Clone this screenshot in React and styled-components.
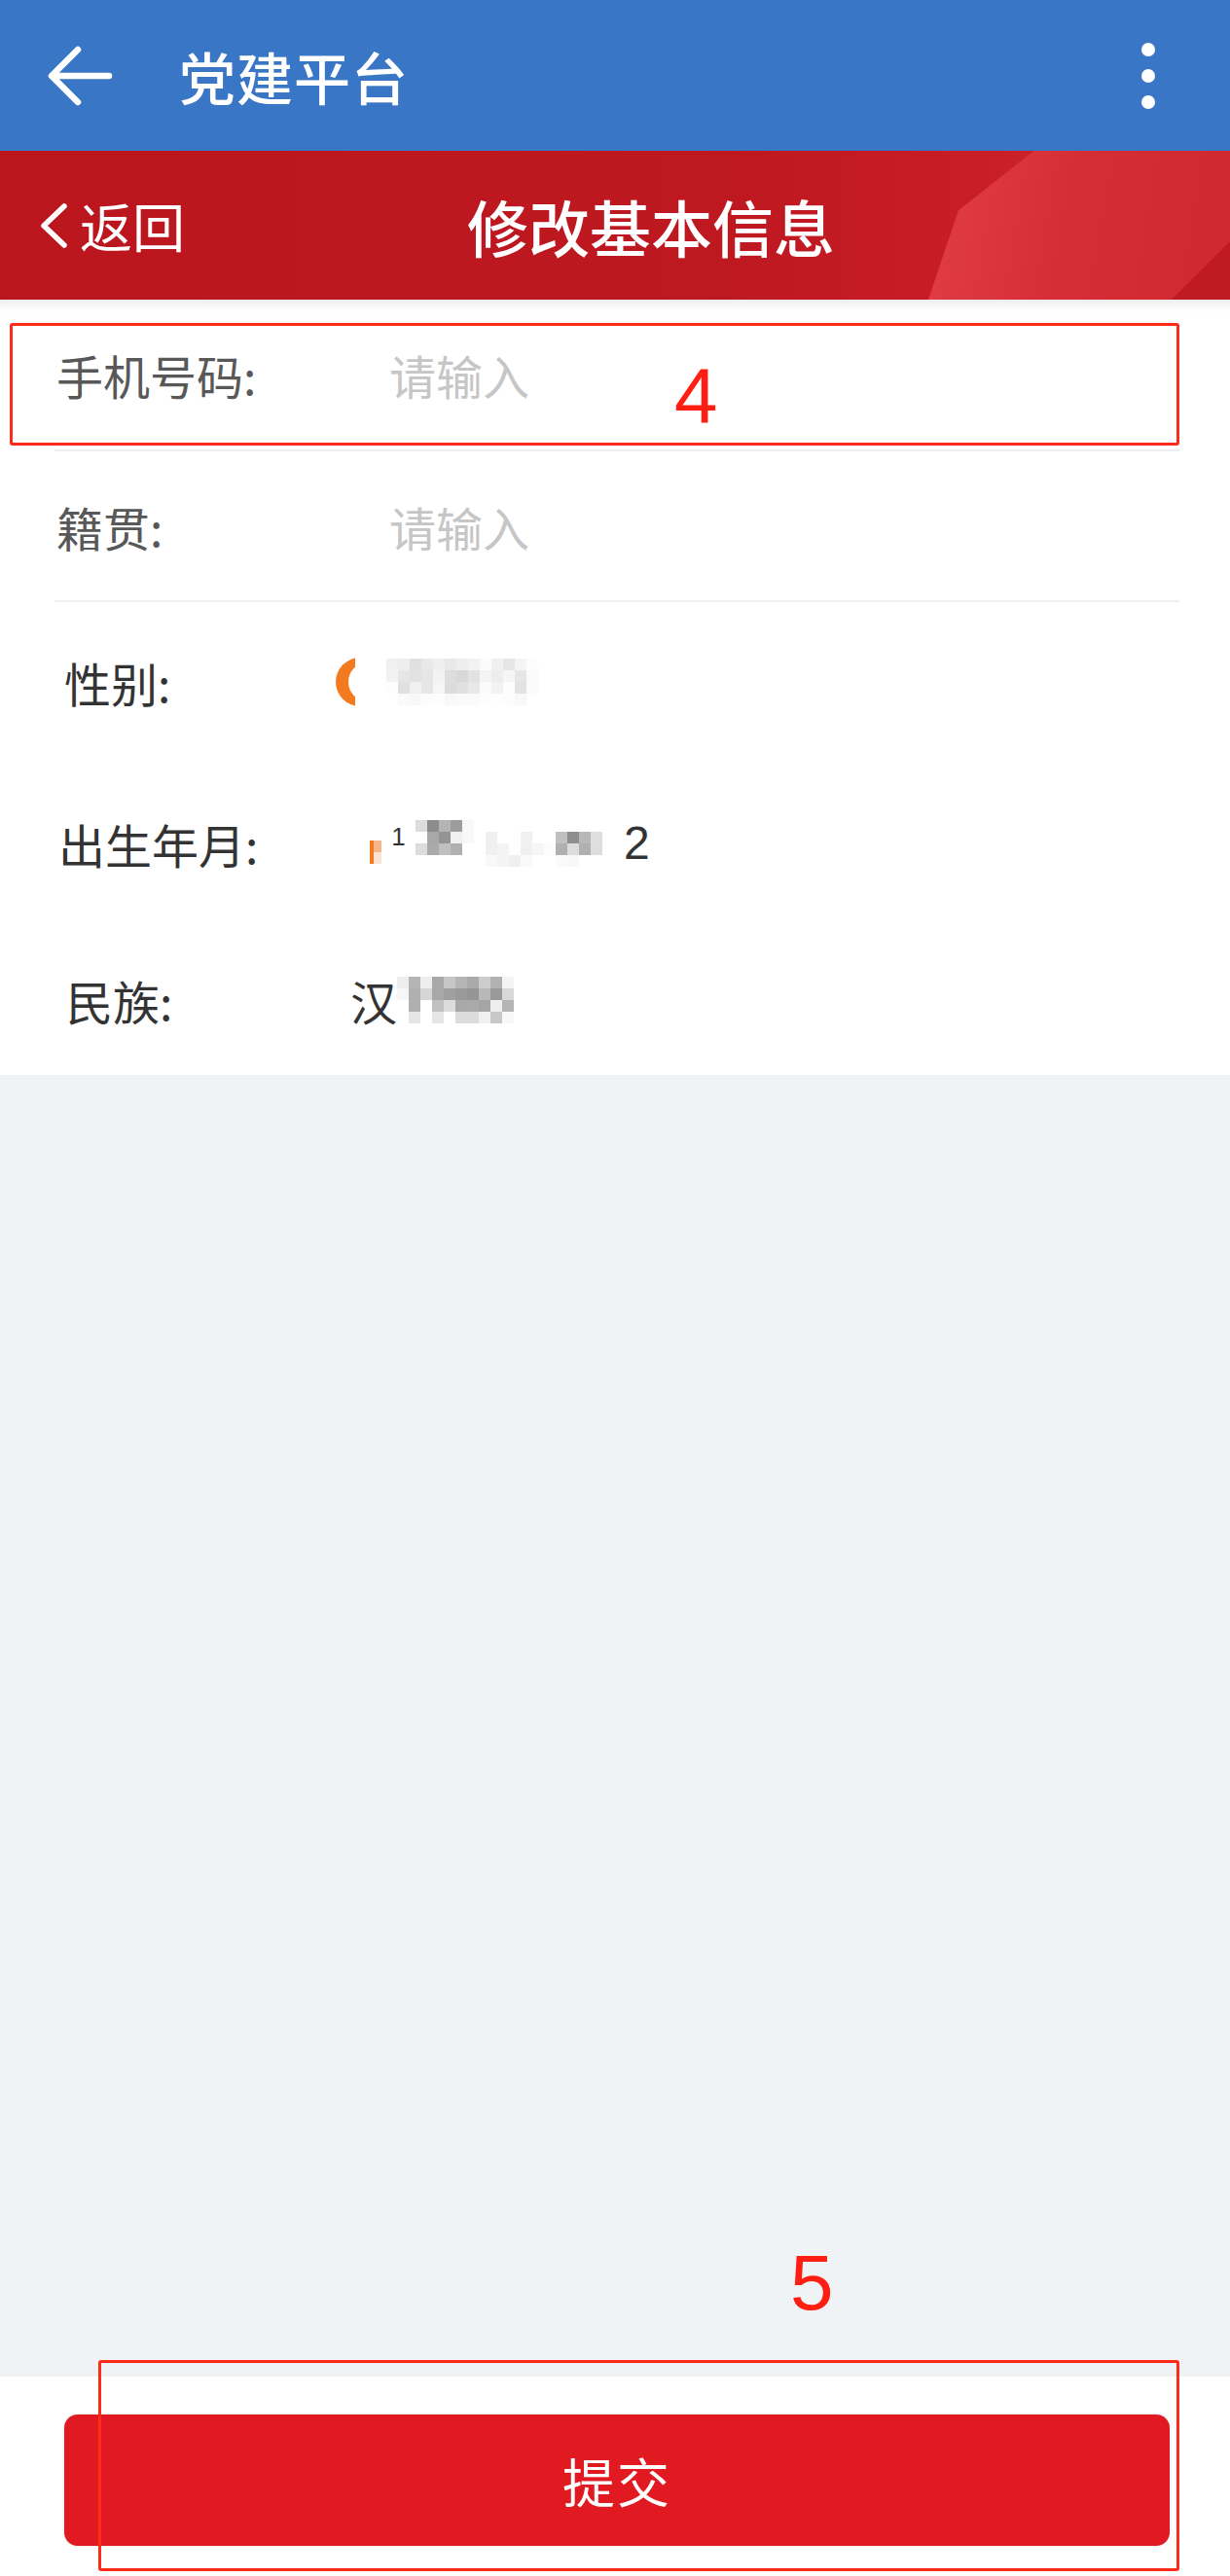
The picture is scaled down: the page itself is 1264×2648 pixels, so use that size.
import React from "react";
import styled, { createGlobalStyle } from "styled-components";

const GlobalStyle = createGlobalStyle`
  html, body {
    margin: 0;
    padding: 0;
    background: #fff;
  }
  body {
    font-family: "Noto Sans CJK SC", "Noto Sans", sans-serif;
  }
`;

const genderMosaic = [
  ["#f0f0f0", "#eeeeee", "#e0e0e0", "#e9e9e9", "#efefef", "#e8e8e8", "#eeeeee", "#f2f2f2", "#fbfbfb", "#f0f0f0", "#e6e6e6", "#f4f4f4", "#fdfdfd"],
  ["#f2f2f2", "#e6e6e6", "#e2e2e2", "#e6e6e6", "#f3f3f3", "#dddddd", "#d8d8d8", "#e2e2e2", "#f4f4f4", "#ededed", "#f6f6f6", "#e6e6e6", "#fafafa"],
  ["#fdfdfd", "#e0e0e0", "#f0f0f0", "#e6e6e6", "#f6f6f6", "#dcdcdc", "#e0e0e0", "#e8e8e8", "#fbfbfb", "#f3f3f3", "#fdfdfd", "#e2e2e2", "#fbfbfb"],
  ["#ffffff", "#fafafa", "#f8f8f8", "#fcfcfc", "#fdfdfd", "#f8f8f8", "#fafafa", "#fafafa", "#fdfdfd", "#fefefe", "#fcfcfc", "#f8f8f8", "#ffffff"],
];

const birthMosaic = [
  ["#dcdcdc", "#8c8c8c", "#b4b4b4", "#9c9c9c", "#f8f8f8", "#ffffff", "#ffffff", "#ffffff", "#ffffff", "#ffffff", "#ffffff", "#ffffff", "#ffffff", "#ffffff", "#ffffff", "#ffffff"],
  ["#ffffff", "#a8a8a8", "#949494", "#f0f0f0", "#f8f8f8", "#ffffff", "#f0f0f0", "#ffffff", "#ffffff", "#f0f0f0", "#ffffff", "#ffffff", "#c0c0c0", "#8e8e8e", "#b8b8b8", "#dedede"],
  ["#dcdcdc", "#aaaaaa", "#c0c0c0", "#b0b0b0", "#ffffff", "#ffffff", "#f0f0f0", "#f4f4f4", "#ffffff", "#f0f0f0", "#f6f6f6", "#fcfcfc", "#b0b0b0", "#dcdcdc", "#b0b0b0", "#dedede"],
  ["#ffffff", "#ffffff", "#ffffff", "#ffffff", "#ffffff", "#ffffff", "#f8f8f8", "#f4f4f4", "#f0f0f0", "#fafafa", "#ffffff", "#ffffff", "#fafafa", "#f8f8f8", "#ffffff", "#ffffff"],
];

const nationMosaic = [
  ["#eeeeee", "#b5b5b5", "#eeeeee", "#a8a8a8", "#c6c6c6", "#b5b5b5", "#aaaaaa", "#cccccc", "#b2b2b2", "#f4f4f4"],
  ["#f6f6f6", "#b0b0b0", "#d6d6d6", "#a8a8a8", "#a0a0a0", "#9a9a9a", "#959595", "#b8b8b8", "#9a9a9a", "#d8d8d8"],
  ["#ffffff", "#b0b0b0", "#ffffff", "#c0c0c0", "#dcdcdc", "#a8a8a8", "#aaaaaa", "#a5a5a5", "#eeeeee", "#b5b5b5"],
  ["#ffffff", "#e6e6e6", "#ffffff", "#e6e6e6", "#ffffff", "#dcdcdc", "#dcdcdc", "#f0f0f0", "#c8c8c8", "#f8f8f8"],
];

const Mosaic = ({ rows }) => (
  <MosaicGrid $cols={rows[0].length}>
    {rows.flat().map((shade, i) => (
      <MosaicCell key={i} $shade={shade} />
    ))}
  </MosaicGrid>
);

export default function App() {
  return (
    <Page>
      <GlobalStyle />
      <AppBar>
        <svg width="70" height="62" viewBox="0 0 70 62">
          <path
            d="M64 31 H6 M32 4 L5 31 L32 58"
            fill="none"
            stroke="#fff"
            strokeWidth="6.5"
            strokeLinecap="round"
            strokeLinejoin="round"
          />
        </svg>
        <AppTitle>党建平台</AppTitle>
        <MoreDots>
          <Dot />
          <Dot />
          <Dot />
        </MoreDots>
      </AppBar>

      <SubHeader>
        <BackLink>
          <svg width="30" height="46" viewBox="0 0 30 46">
            <path
              d="M26 3 L5 23 L26 43"
              fill="none"
              stroke="#fff"
              strokeWidth="5.5"
              strokeLinecap="round"
              strokeLinejoin="round"
            />
          </svg>
          <span>返回</span>
        </BackLink>
        <SubTitle>修改基本信息</SubTitle>
      </SubHeader>

      <Form>
        <Row $h={154} $pad={58}>
          <Label $w={342} $muted>手机号码:</Label>
          <Placeholder>请输入</Placeholder>
        </Row>
        <Divider />
        <Row $h={153} $pad={58}>
          <Label $w={342} $muted>籍贯:</Label>
          <Placeholder>请输入</Placeholder>
        </Row>
        <Divider />
        <Row $h={164} $pad={66}>
          <Label $w={279}>性别:</Label>
          <Value>
            <svg width="20" height="50" viewBox="0 0 20 50">
              <circle cx="25" cy="25" r="25" fill="#f47a20" />
              <circle cx="33" cy="25" r="20" fill="#fff" />
            </svg>
            <Spacer $w={32} />
            <Mosaic rows={genderMosaic} />
          </Value>
        </Row>
        <Row $h={168} $pad={60}>
          <Label $w={320}>出生年月:</Label>
          <Value>
            <OrangeMark />
            <SmallDigit>1</SmallDigit>
            <Mosaic rows={birthMosaic} />
            <Spacer $w={22} />
            <Digit>2</Digit>
          </Value>
        </Row>
        <Row $h={154} $pad={68}>
          <Label $w={292}>民族:</Label>
          <Value>
            <span>汉</span>
            <Mosaic rows={nationMosaic} />
          </Value>
        </Row>
      </Form>

      <Filler />

      <Footer>
        <SubmitButton>提交</SubmitButton>
      </Footer>

      <Annotation $top={332} $left={10} $w={1202} $h={126} />
      <AnnotationNumber $top={367} $left={693}>4</AnnotationNumber>
      <Annotation $top={2426} $left={101} $w={1111} $h={217} />
      <AnnotationNumber $top={2307} $left={812}>5</AnnotationNumber>
    </Page>
  );
}

const Page = styled.div`
  position: relative;
  width: 1264px;
  min-height: 2648px;
  display: flex;
  flex-direction: column;
  background: #eff3f6;
  overflow: hidden;
`;

const AppBar = styled.header`
  height: 155px;
  flex-shrink: 0;
  display: flex;
  align-items: center;
  padding: 0 0 0 48px;
  background: #3976c5;
  box-sizing: border-box;
`;

const AppTitle = styled.h1`
  margin: 0 0 0 66px;
  flex: 1;
  color: #fff;
  font-size: 58px;
  font-weight: 500;
  line-height: 1;
  letter-spacing: 1px;
`;

const MoreDots = styled.div`
  width: 14px;
  margin-right: 77px;
  display: flex;
  flex-direction: column;
  gap: 13px;
`;

const Dot = styled.span`
  width: 14px;
  height: 14px;
  border-radius: 50%;
  background: #fff;
`;

const SubHeader = styled.div`
  position: relative;
  height: 153px;
  flex-shrink: 0;
  display: flex;
  align-items: center;
  padding-left: 40px;
  box-sizing: border-box;
  background: linear-gradient(90deg, #bb161e 0%, #be1820 60%, #c81d26 78%, #d02a31 100%);
  overflow: hidden;

  &::before {
    content: "";
    position: absolute;
    top: 0;
    right: 0;
    bottom: 0;
    width: 310px;
    background: linear-gradient(100deg, #e23d45 0%, #d62e36 45%, #cf282f 100%);
    clip-path: polygon(0 100%, 10% 40%, 35% 0, 100% 0, 100% 100%);
  }

  &::after {
    content: "";
    position: absolute;
    right: 0;
    bottom: 0;
    width: 60px;
    height: 60px;
    background: #c01a22;
    clip-path: polygon(100% 0, 100% 100%, 0 100%);
  }

  > * {
    position: relative;
    z-index: 1;
  }
`;

const BackLink = styled.div`
  width: 440px;
  display: flex;
  align-items: center;
  gap: 12px;
  color: #fff;
  font-size: 54px;
  line-height: 1;
`;

const SubTitle = styled.h2`
  margin: 0;
  color: #fff;
  font-size: 63px;
  font-weight: 500;
  line-height: 1;
`;

const Form = styled.section`
  flex-shrink: 0;
  display: flex;
  flex-direction: column;
  background: linear-gradient(180deg, #ececec 0px, #fafafa 8px, #ffffff 14px);
`;

const Row = styled.div`
  height: ${(p) => p.$h}px;
  display: flex;
  align-items: center;
  padding-left: ${(p) => p.$pad}px;
  box-sizing: border-box;
`;

const Label = styled.span`
  width: ${(p) => p.$w}px;
  flex-shrink: 0;
  color: ${(p) => (p.$muted ? "#585858" : "#333")};
  font-size: 48px;
  line-height: 1;
`;

const Placeholder = styled.span`
  color: #c6c6c6;
  font-size: 48px;
  line-height: 1;
`;

const Value = styled.div`
  display: flex;
  align-items: center;
  color: #333;
  font-size: 48px;
  line-height: 1;
`;

const Spacer = styled.span`
  width: ${(p) => p.$w}px;
  flex-shrink: 0;
`;

const MosaicGrid = styled.div`
  display: grid;
  grid-template-columns: repeat(${(p) => p.$cols}, 12px);
  grid-auto-rows: 12px;
`;

const MosaicCell = styled.span`
  background: ${(p) => p.$shade};
`;

const OrangeMark = styled.span`
  width: 12px;
  height: 24px;
  margin-top: 18px;
  background: linear-gradient(180deg, #f7b58c 0 50%, #fbe2d2 50% 100%);
  border-left: 4px solid #f47a20;
  box-sizing: border-box;
`;

const SmallDigit = styled.span`
  width: 35px;
  margin-top: -14px;
  text-align: center;
  font-family: "Liberation Sans", sans-serif;
  font-size: 26px;
  color: #333;
`;

const Digit = styled.span`
  font-family: "Liberation Sans Narrow", "Liberation Sans", sans-serif;
  font-size: 48px;
  color: #333;
`;

const Divider = styled.hr`
  margin: 0 52px 0 56px;
  border: none;
  height: 2px;
  background: #efefef;
`;

const Filler = styled.div`
  flex: 1;
  background: #eff3f6;
`;

const Footer = styled.footer`
  height: 205px;
  flex-shrink: 0;
  display: flex;
  padding: 39px 62px 31px 66px;
  box-sizing: border-box;
  background: #fff;
`;

const SubmitButton = styled.button`
  flex: 1;
  border: none;
  border-radius: 14px;
  background: #e11a22;
  box-shadow: 0 0 3px rgba(0, 0, 0, 0.18);
  color: #fff;
  font-family: "Noto Sans CJK SC", sans-serif;
  font-size: 54px;
  letter-spacing: 2px;
  cursor: pointer;
`;

const Annotation = styled.div`
  position: absolute;
  top: ${(p) => p.$top}px;
  left: ${(p) => p.$left}px;
  width: ${(p) => p.$w}px;
  height: ${(p) => p.$h}px;
  border: 3px solid #ff2a1a;
  border-radius: 3px;
  box-sizing: border-box;
  pointer-events: none;
`;

const AnnotationNumber = styled.span`
  position: absolute;
  top: ${(p) => p.$top}px;
  left: ${(p) => p.$left}px;
  color: #ff1e12;
  font-family: "Liberation Sans", sans-serif;
  font-size: 80px;
  line-height: 1;
`;
